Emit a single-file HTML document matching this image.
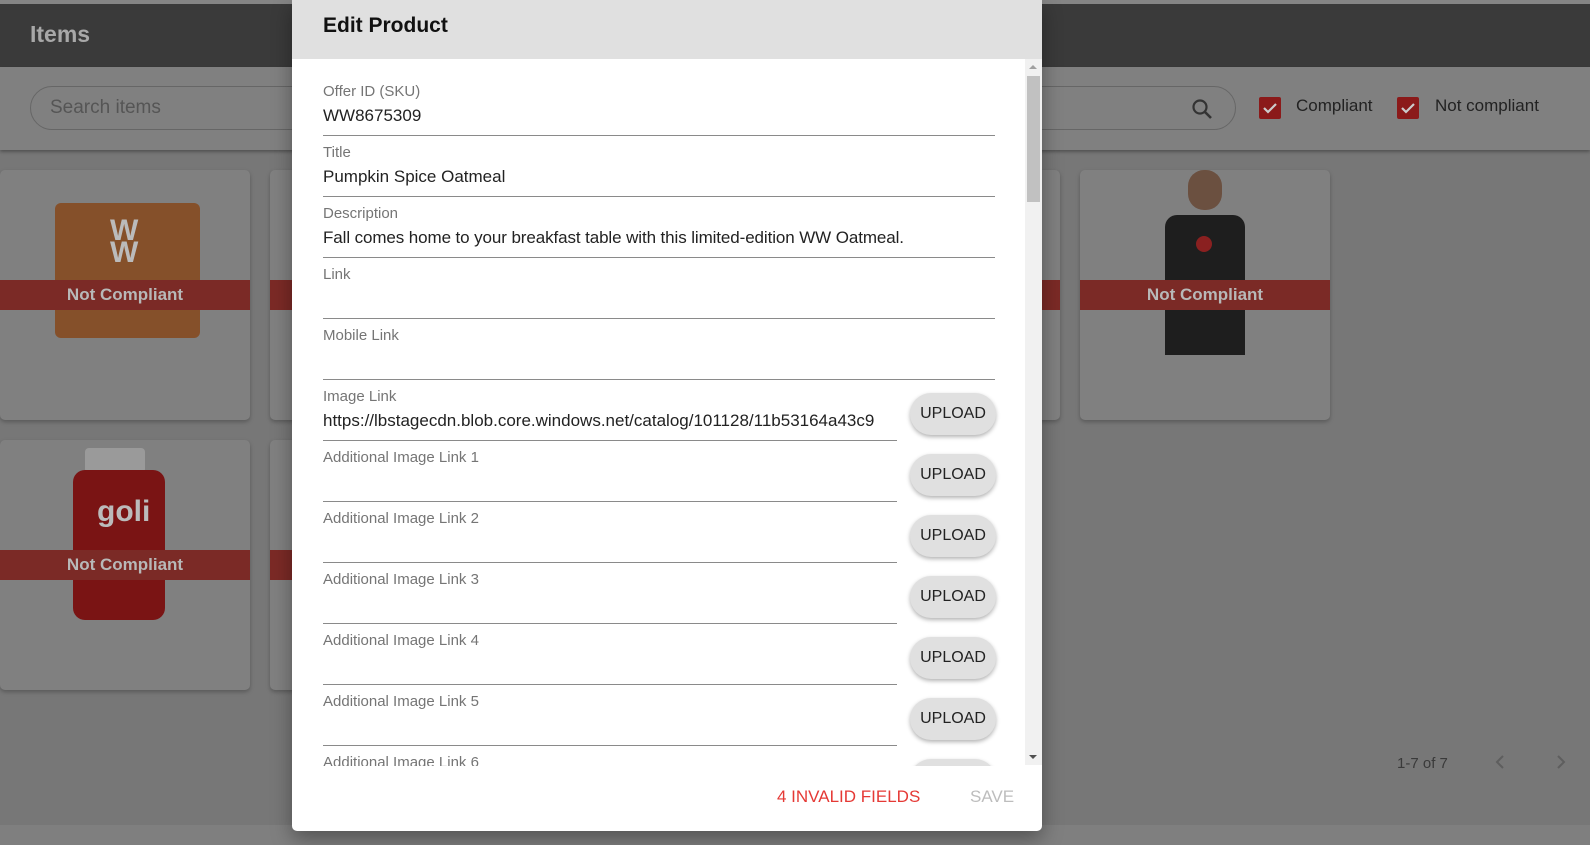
<!DOCTYPE html>
<html><head><meta charset="utf-8"><style>
*{margin:0;padding:0;box-sizing:border-box}
body{width:1590px;height:845px;overflow:hidden;background:#777;font-family:"Liberation Sans",sans-serif;position:relative}
.abs{position:absolute}
.card{position:absolute;width:250px;height:250px;background:#808080;border-radius:5px;box-shadow:0 2px 4px rgba(0,0,0,.25);overflow:hidden}
.band{position:absolute;left:0;width:250px;height:30px;background:#7b2a26;color:#b8b8b8;font-weight:bold;font-size:17px;text-align:center;line-height:30px}
.lbl{position:absolute;left:323px;font-size:15px;color:#757575}
.val{position:absolute;left:323px;font-size:17px;color:#222;white-space:nowrap;overflow:hidden}
.line{position:absolute;left:323px;height:1px;background:#8a8a8a}
.up{position:absolute;left:910px;width:86px;height:42px;border-radius:21px;background:#e0e0e0;box-shadow:0 2px 4px rgba(0,0,0,.3);font-size:16px;color:#222;text-align:center;line-height:42px}
</style></head><body>
<div class="abs" style="left:0;top:0;width:1590px;height:4px;background:#858585"></div>
<div class="abs" style="left:0;top:4px;width:1590px;height:63px;background:#3a3a3a"></div>
<div class="abs" style="left:30px;top:21px;font-size:23px;font-weight:bold;color:#a8a8a8">Items</div>
<div class="abs" style="left:0;top:67px;width:1590px;height:83px;background:#808080;box-shadow:0 2px 3px rgba(0,0,0,.3)"></div>
<div class="abs" style="left:30px;top:86px;width:1206px;height:44px;border:1px solid #666;border-radius:22px"></div>
<div class="abs" style="left:50px;top:97px;font-size:19px;color:#555">Search items</div>
<svg class="abs" style="left:1190px;top:97px" width="24" height="24" viewBox="0 0 24 24"><circle cx="10" cy="10" r="6.5" fill="none" stroke="#333" stroke-width="2.2"/><path d="M15 15l6 6" stroke="#333" stroke-width="2.6"/></svg>
<div class="abs" style="left:1259px;top:97px;width:22px;height:22px;background:#8b1a1a;border-radius:2px"></div>
<svg class="abs" style="left:1259px;top:97px" width="22" height="22"><path d="M5 11l4 4 8-8" stroke="#ccc" stroke-width="2.2" fill="none"/></svg>
<div class="abs" style="left:1296px;top:96px;font-size:17px;color:#222">Compliant</div>
<div class="abs" style="left:1397px;top:97px;width:22px;height:22px;background:#8b1a1a;border-radius:2px"></div>
<svg class="abs" style="left:1397px;top:97px" width="22" height="22"><path d="M5 11l4 4 8-8" stroke="#ccc" stroke-width="2.2" fill="none"/></svg>
<div class="abs" style="left:1435px;top:96px;font-size:17px;color:#222">Not compliant</div>

<div class="card" style="left:0;top:170px">
 <div class="abs" style="left:55px;top:33px;width:145px;height:135px;background:#85502a;border-radius:6px"></div>
 <div class="abs" style="left:110px;top:50px;font-size:30px;font-weight:bold;color:#bbb;line-height:22px">W<br>W</div>
 <div class="band" style="top:110px">Not Compliant</div></div>
<div class="card" style="left:270px;top:170px"><div class="band" style="top:110px"></div></div>
<div class="card" style="left:810px;top:170px"><div class="band" style="top:110px"></div></div>
<div class="card" style="left:1080px;top:170px">
 <div class="abs" style="left:108px;top:0;width:34px;height:40px;background:#6b5040;border-radius:16px"></div>
 <div class="abs" style="left:85px;top:45px;width:80px;height:140px;background:#1e1e1e;border-radius:12px 12px 0 0"></div>
 <div class="abs" style="left:116px;top:66px;width:16px;height:16px;background:#8a2020;border-radius:50%"></div>
 <div class="band" style="top:110px">Not Compliant</div></div>
<div class="card" style="left:0;top:440px">
 <div class="abs" style="left:85px;top:8px;width:60px;height:25px;background:#9a9a9a;border-radius:4px"></div>
 <div class="abs" style="left:73px;top:30px;width:92px;height:150px;background:#7a1414;border-radius:12px"></div>
 <div class="abs" style="left:97px;top:55px;font-size:30px;font-weight:bold;color:#bbb">goli</div>
 <div class="band" style="top:110px">Not Compliant</div></div>
<div class="card" style="left:270px;top:440px"><div class="band" style="top:110px"></div></div>
<div class="abs" style="left:1397px;top:755px;font-size:15px;color:#3a3a3a">1-7 of 7</div>
<svg class="abs" style="left:1492px;top:754px" width="16" height="16"><path d="M11 2L5 8l6 6" stroke="#5e5e5e" stroke-width="2" fill="none"/></svg>
<svg class="abs" style="left:1553px;top:754px" width="16" height="16"><path d="M5 2l6 6-6 6" stroke="#5e5e5e" stroke-width="2" fill="none"/></svg>
<div class="abs" style="left:0;top:825px;width:1590px;height:20px;background:#7f7f7f"></div>

<div class="abs" style="left:292px;top:0;width:750px;height:831px;background:#fff;border-radius:0 0 5px 5px;box-shadow:0 8px 20px rgba(0,0,0,.35)"></div>
<div class="abs" style="left:292px;top:0;width:750px;height:59px;background:#e0e0e0"></div>
<div class="abs" style="left:323px;top:14px;font-size:21px;font-weight:bold;color:#111">Edit Product</div>
<div class="abs" style="left:1025px;top:59px;width:17px;height:706px;background:#f1f1f1"></div>
<div class="abs" style="left:1027px;top:76px;width:13px;height:126px;background:#c1c1c1"></div>
<svg class="abs" style="left:1029px;top:64px" width="8" height="6"><path d="M0 5L4 1 8 5z" fill="#a0a0a0"/></svg>
<svg class="abs" style="left:1029px;top:754px" width="8" height="6"><path d="M0 1L4 5 8 1z" fill="#505050"/></svg>

<div class="lbl" style="top:83px">Offer ID (SKU)</div><div class="val" style="top:106px">WW8675309</div><div class="line" style="top:135px;width:672px"></div>
<div class="lbl" style="top:144px">Title</div><div class="val" style="top:167px">Pumpkin Spice Oatmeal</div><div class="line" style="top:196px;width:672px"></div>
<div class="lbl" style="top:205px">Description</div><div class="val" style="top:228px;letter-spacing:-0.1px">Fall comes home to your breakfast table with this limited-edition WW Oatmeal.</div><div class="line" style="top:257px;width:672px"></div>
<div class="lbl" style="top:266px">Link</div><div class="line" style="top:318px;width:672px"></div>
<div class="lbl" style="top:327px">Mobile Link</div><div class="line" style="top:379px;width:672px"></div>
<div class="lbl" style="top:388px">Image Link</div><div class="val" style="top:411px;width:574px">https://lbstagecdn.blob.core.windows.net/catalog/101128/11b53164a43c9</div><div class="line" style="top:440px;width:574px"></div><div class="up" style="top:393px">UPLOAD</div>
<div class="lbl" style="top:449px">Additional Image Link 1</div><div class="line" style="top:501px;width:574px"></div><div class="up" style="top:454px">UPLOAD</div>
<div class="lbl" style="top:510px">Additional Image Link 2</div><div class="line" style="top:562px;width:574px"></div><div class="up" style="top:515px">UPLOAD</div>
<div class="lbl" style="top:571px">Additional Image Link 3</div><div class="line" style="top:623px;width:574px"></div><div class="up" style="top:576px">UPLOAD</div>
<div class="lbl" style="top:632px">Additional Image Link 4</div><div class="line" style="top:684px;width:574px"></div><div class="up" style="top:637px">UPLOAD</div>
<div class="lbl" style="top:693px">Additional Image Link 5</div><div class="line" style="top:745px;width:574px"></div><div class="up" style="top:698px">UPLOAD</div>
<div class="abs" style="left:292px;top:754px;width:733px;height:12px;overflow:hidden"><div class="lbl" style="left:31px;top:0">Additional Image Link 6</div><div class="up" style="left:618px;top:5px"></div></div>
<div class="abs" style="left:777px;top:787px;font-size:17px;color:#e53935">4 INVALID FIELDS</div>
<div class="abs" style="left:970px;top:787px;font-size:17px;color:#bdbdbd">SAVE</div>
</body></html>
